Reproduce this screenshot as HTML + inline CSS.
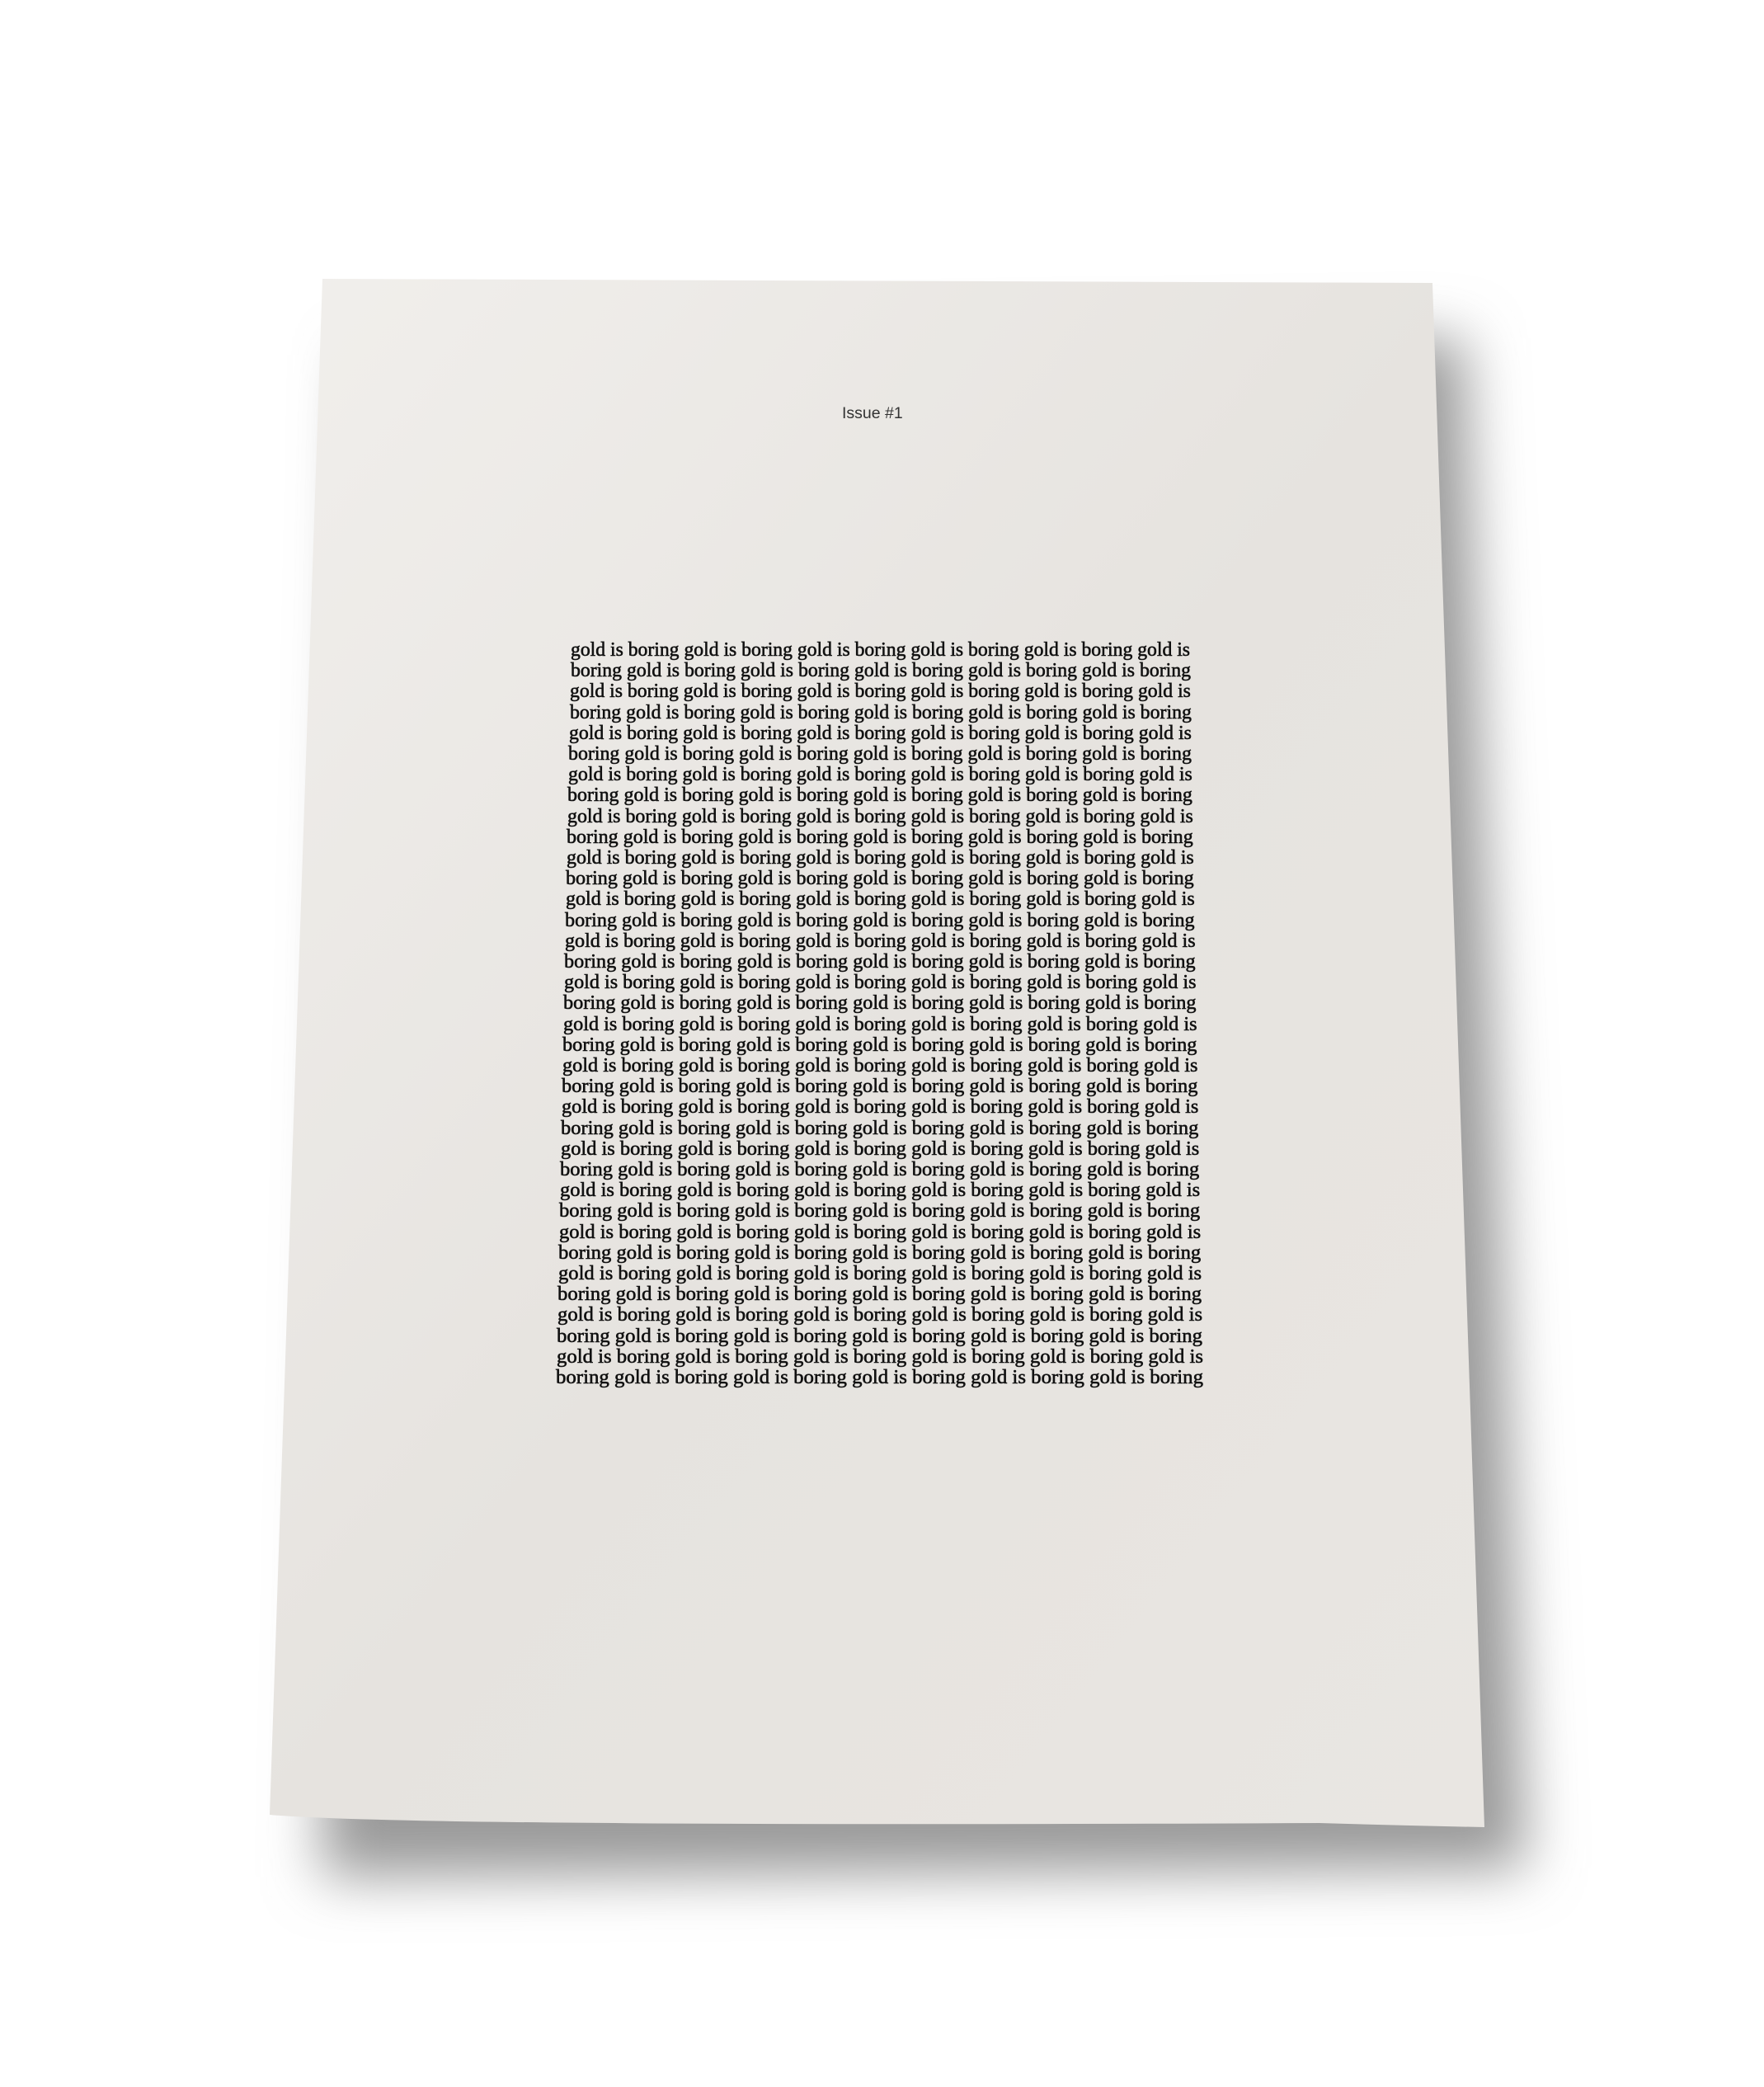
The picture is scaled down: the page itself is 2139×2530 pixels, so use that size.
<!DOCTYPE html>
<html><head><meta charset="utf-8"><style>
html,body{margin:0;padding:0;background:#fff;}
body{width:2139px;height:2530px;position:relative;overflow:hidden;}
svg{position:absolute;left:0;top:0;}
.issue{position:absolute;left:1021px;top:490px;font:19.5px "Liberation Sans",sans-serif;color:#333;white-space:nowrap;}
.l{position:absolute;height:24px;font:24px/24px "Liberation Serif",serif;color:#111;white-space:nowrap;transform-origin:0 0;-webkit-text-stroke:0.6px #111;}
</style></head><body>
<svg width="2139" height="2530" viewBox="0 0 2139 2530">
<defs>
<filter id="b" x="-20%" y="-20%" width="140%" height="140%"><feGaussianBlur stdDeviation="34"/></filter>
<linearGradient id="g" x1="0" y1="0" x2="1" y2="1">
<stop offset="0" stop-color="#f1efec"/><stop offset="0.5" stop-color="#e6e3df"/><stop offset="1" stop-color="#e9e6e2"/>
</linearGradient>
</defs>
<polygon points="430,430 1775,410 1850,2265 390,2275" fill="#9a9a9a" filter="url(#b)"/>
<path d="M391,338 L1737,343 L1800,2215 Q1700,2213 1600,2210 Q500,2215 327,2200 Z" fill="url(#g)"/>
</svg>
<div class="issue">Issue #1</div>
<div id="t"></div>
<script>
var A="gold is boring gold is boring gold is boring gold is boring gold is boring gold is",B="boring gold is boring gold is boring gold is boring gold is boring gold is boring",h="";
for(var i=0;i<36;i++){var y=795+25.2*i,l=692-0.514*i,w=751+0.971*i;
h+='<div class="l" data-w="'+w.toFixed(1)+'" style="top:'+(y-19).toFixed(1)+'px;left:'+l.toFixed(1)+'px">'+(i%2?B:A)+'</div>';}
var t=document.getElementById('t');t.innerHTML=h;
var ls=t.querySelectorAll('.l');
for(var j=0;j<ls.length;j++){var e=ls[j];var nw=e.getBoundingClientRect().width;e.style.transform='scaleX('+(parseFloat(e.getAttribute('data-w'))/nw)+')';}
</script>
</body></html>
